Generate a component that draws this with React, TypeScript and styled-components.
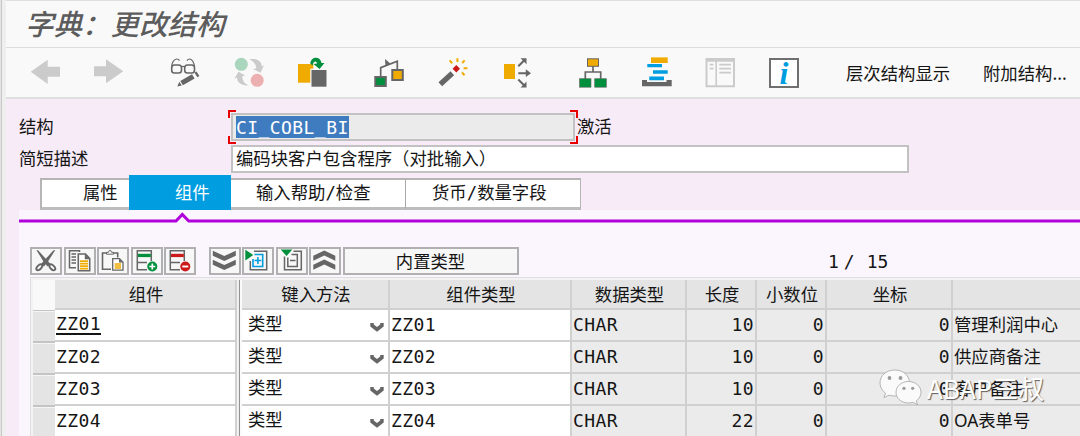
import type { ReactNode } from 'react';
import styled, { createGlobalStyle, css } from 'styled-components';

const GREY = '#666666';
const LIGHT = '#cbcbcb';
const ORANGE = '#f0ab00';
const GREEN = '#008f3c';
const BLUE = '#009de0';
const RED = '#cc1919';

const rows = [
    { name: 'ZZ01', length: 10, text: '管理利润中心' },
    { name: 'ZZ02', length: 10, text: '供应商备注' },
    { name: 'ZZ03', length: 10, text: '客户备注' },
    { name: 'ZZ04', length: 22, text: 'OA表单号' },
]

const Icon = ({ children }: { children: ReactNode }) => <IconSvg viewBox="0 0 32 32">{children}</IconSvg>

const SmallIcon = ({ children }: { children: ReactNode }) => <SmallSvg viewBox="0 0 28 24">{children}</SmallSvg>

const MainToolbar = () => (
    <Toolbar>
        <Slot $width={63}>
            <Icon><path d="M1.7 14.7 18.7 2.7V9.7H31V19.7H18.7V27Z" fill={LIGHT} /></Icon>
        </Slot>
        <Slot $width={77}>
            <Icon><path d="M31.3 14.3 14 2.3V9.3H2V19.3H14V26.3Z" fill={LIGHT} /></Icon>
        </Slot>
        <Slot $width={64}>
            <Icon>
                <g fill="none" stroke={GREY} strokeWidth="1.6">
                    <rect x="2.7" y="8" width="9.8" height="8" rx="2.8" />
                    <rect x="15.7" y="8" width="9.8" height="8" rx="2.8" />
                    <path d="M12.5 9.8Q14 8.8 15.7 9.8M2.6 10C3 6 5 2.5 7.5 2Q9.5 1.8 10.5 3.6M25.6 10C25 6 23.5 2.5 20.8 2Q19 1.8 18 3.6" strokeWidth="1.2" />
                </g>
                <path d="M8.3 29.5 10.3 24.7 12.8 28.5ZM11.3 24 23 17.2 25.6 21.6 13.9 28.2ZM25.5 15.7 27.5 14.6 30.4 19 28.4 20.3Z" fill={GREY} />
            </Icon>
        </Slot>
        <Slot $width={63}>
            <Icon>
                <circle cx="8.3" cy="7.3" r="6.5" fill="#a9d6bc" />
                <circle cx="24.2" cy="23.3" r="6.5" fill="#edb0b0" />
                <path d="M16.5 2.3C24 1 29 4.5 28.6 9.5L31 8.3 27.5 15.7 20 12 23.3 11.5C23 7.5 21 4.5 16.500 2.3Z" fill={LIGHT} />
                <path d="M15.7 28.3C8.5 29 4 25.5 4 20.5L1.3 21.7 5.5 14.7 12.3 18.5 9.3 19C9.300 23.3 11 26.500 15.7 28.3Z" fill={LIGHT} />
            </Icon>
        </Slot>
        <Slot $width={77}>
            <Icon>
                <rect x="2" y="7" width="15.3" height="18.7" fill={ORANGE} />
                <rect x="14.3" y="11.7" width="18" height="19" fill="#f9f9f9" />
                <rect x="15.5" y="13" width="15" height="16.7" fill={GREY} />
                <path d="M14.3 6.500C15 -1 24.5 -1 25.500 6L28.5 6 23.5 12 17.5 7 21 6.500C20.5 3.5 17.5 3.8 16.5 8.500Z" fill={GREEN} />
            </Icon>
        </Slot>
        <Slot $width={64}>
            <Icon>
                <path d="M7.7 19V10.7L24.3 4.3V12" fill="none" stroke={GREY} strokeWidth="1.7" />
                <path d="M12 2 17.3 6.600 12.500 9.3Z" fill={GREY} />
                <rect x="2.3" y="20" width="10.5" height="9" fill={GREEN} stroke={GREY} strokeWidth="2" />
                <rect x="19.3" y="13" width="10.5" height="10" fill={ORANGE} stroke={GREY} strokeWidth="2" />
            </Icon>
        </Slot>
        <Slot $width={64}>
            <Icon>
                <path d="M3.3 27.3 15.3 16.3" stroke={GREY} strokeWidth="5.3" />
                <path d="M19.3 8 23 11.7 19.3 15.4 15.6 11.7Z" fill={RED} />
                <path d="M20.4 1.2V5M12.6 3.4 15.2 6.2M27.6 3.4 25.2 6M26.6 11.2H30.4M25 15.5 27.5 18.2" stroke={ORANGE} strokeWidth="2" />
            </Icon>
        </Slot>
        <Slot $width={76}>
            <Icon>
                <rect x="3" y="7" width="11" height="15" fill={ORANGE} />
                <path d="M17.3 9.3 23.8 2.8M17.3 16.2H28M17.3 22.5 24 29.2" stroke={GREY} strokeWidth="2" />
                <path d="M19.5 1.3H25.5V7.3ZM24.8 12.3 30 16.2 24.8 20.1ZM25.5 24.500V30.500H19.5Z" fill={GREY} />
            </Icon>
        </Slot>
        <Slot $width={64}>
            <Icon>
                <path d="M16 9V14.7M8.3 22V15H23.7V22" fill="none" stroke={GREY} strokeWidth="1.7" />
                <rect x="10.5" y="1.8" width="11" height="7.5" fill={ORANGE} stroke={GREY} />
                <rect x="2.500" y="21.7" width="11.5" height="8.5" fill={GREEN} stroke={GREY} strokeWidth="0.6" />
                <rect x="17.7" y="21.7" width="11.7" height="8.5" fill={GREEN} stroke={GREY} strokeWidth="0.6" />
            </Icon>
        </Slot>
        <Slot $width={63}>
            <Icon>
                <path d="M1 23H6V25H25.5V23H30.7V29.3H1Z" fill={GREY} />
                <rect x="10" y="0.4" width="16.7" height="5.6" fill={ORANGE} />
                <path d="M6.3 7H21V10.3H6.3ZM12 13.3H26.7V16.7H12ZM8.3 19.6H23V23.2H8.3Z" fill={BLUE} />
            </Icon>
        </Slot>
        <Slot $width={64}>
            <Icon>
                <path d="M2.5 2H30V29.3H2.5Z" fill="none" stroke={LIGHT} strokeWidth="2" />
                <path d="M2 1H30.7V4.7H2ZM11.4 4H13V29H11.4Z" fill={LIGHT} />
                <path d="M5.7 7.7H9.5M5.7 11.7H9.5M15.3 7.7H27M15.3 11.7H27M15.3 15.7H27" stroke={LIGHT} strokeWidth="1.8" />
            </Icon>
        </Slot>
        <Slot $width={78}>
            <InfoIcon>i</InfoIcon>
        </Slot>
        <ToolbarText>层次结构显示</ToolbarText>
        <ToolbarText>附加结构...</ToolbarText>
    </Toolbar>
)

const TableToolbar = () => (
    <ButtonBar>
        <SmallButton>
            <SmallIcon>
                <path d="M4.3 1 6.3 1.5 18.5 15 15.5 17.5 11.500 12.5Z" fill={GREY} />
                <path d="M23.3 1 21.3 1.5 9 15 12 17.5 16 12.5Z" fill={GREY} />
                <ellipse cx="7.3" cy="18.3" rx="3.6" ry="2" transform="rotate(-45 7.3 18.3)" fill="none" stroke={GREY} strokeWidth="1.9" />
                <ellipse cx="20.3" cy="18.3" rx="3.6" ry="2" transform="rotate(45 20.3 18.3)" fill="none" stroke={GREY} strokeWidth="1.9" />
            </SmallIcon>
        </SmallButton>
        <SmallButton>
            <SmallIcon>
                <path d="M10 18.7H3.5V1.7H13.5V3" fill="none" stroke={GREY} strokeWidth="1.5" />
                <path d="M5.5 5H10M5.5 8H10M5.5 11H10M5.5 14H10" stroke={GREY} strokeWidth="1.4" />
                <path d="M12.3 5H19.5L23.7 9.5V21.7H12.3Z" fill="#fff" stroke={GREY} strokeWidth="1.6" />
                <path d="M18.8 5V10.2H23.7Z" fill={GREY} />
                <path d="M14 12.2H22M14 14.7H22M14 17.2H22M14 19.7H22" stroke={ORANGE} strokeWidth="1.8" />
            </SmallIcon>
        </SmallButton>
        <SmallButton>
            <SmallIcon>
                <path d="M12 20.3H3.5V4H7.5M14.5 4H18.7V8.5" fill="none" stroke={GREY} strokeWidth="1.6" />
                <path d="M7.5 5.2V3.3H9.5L10.3 1.5H11.8L12.6 3.3H14.5V5.2Z" fill="none" stroke={GREY} />
                <path d="M13.7 9.7H20.5L24 13.2V21.2H13.7Z" fill="#fff" stroke={GREY} strokeWidth="1.3" />
                <path d="M20 9.5V13.5H24Z" fill={GREY} />
                <path d="M15.7 15H22M15.7 17H22M15.7 19H22" stroke={ORANGE} strokeWidth="1.6" />
            </SmallIcon>
        </SmallButton>
        <SmallButton>
            <SmallIcon>
                <path d="M14 20.7H4.3V1.7H18.3V12M4.3 13.5H14" fill="none" stroke={GREY} strokeWidth="1.5" />
                <rect x="5" y="4.8" width="12.8" height="3.3" fill={GREEN} />
                <circle cx="19.3" cy="17.5" r="5" fill={GREEN} />
                <path d="M16.3 17.5H22.3M19.3 14.5V20.5" stroke="#fff" strokeWidth="1.7" />
            </SmallIcon>
        </SmallButton>
        <SmallButton>
            <SmallIcon>
                <path d="M14 20.7H4.3V1.7H18.3V12M4.3 13.5H14" fill="none" stroke={GREY} strokeWidth="1.5" />
                <rect x="5" y="4.8" width="12.8" height="3.3" fill={RED} />
                <circle cx="19.3" cy="17.5" r="5" fill={RED} />
                <path d="M16.3 17.5H22.3" stroke="#fff" strokeWidth="1.9" />
            </SmallIcon>
        </SmallButton>
        <SmallButton $spaced>
            <SmallIcon>
                <path d="M1.8 1.7 13.3 7 24.8 1.7V6.7L13.3 12 1.8 6.7ZM1.8 10.700 13.3 16 24.8 10.700V15.700L13.3 21 1.8 15.7Z" fill={GREY} />
            </SmallIcon>
        </SmallButton>
        <SmallButton>
            <SmallIcon>
                <path d="M10 2.2H22.7V20.7H6.3V12" fill="none" stroke={GREY} strokeWidth="1.5" />
                <path d="M10.5 5.5H18.7V17.5H9V10" fill="none" stroke={BLUE} strokeWidth="1.6" />
                <path d="M10.5 11.5H17.3M13.9 8V15" stroke={BLUE} strokeWidth="1.5" />
                <path d="M1.3 0.7 9.3 6 1.3 11.5Z" fill={GREEN} />
            </SmallIcon>
        </SmallButton>
        <SmallButton>
            <SmallIcon>
                <path d="M15.5 2.2H23.3V20.7H6.5V7.5" fill="none" stroke={GREY} strokeWidth="1.5" />
                <path d="M13.5 5.5H19.3V17.5H9.8V8.5M12 11.5H17.5" fill="none" stroke={GREY} strokeWidth="1.5" />
                <path d="M2.7 0.6H14.3L8.5 7Z" fill={GREEN} />
            </SmallIcon>
        </SmallButton>
        <SmallButton>
            <SmallIcon>
                <path d="M2.3 6.8 13.3 1.5 24.3 6.8V11.8L13.3 6.5 2.3 11.8ZM2.3 15.8 13.3 10.5 24.3 15.8V20.8L13.3 15.5 2.3 20.8Z" fill={GREY} />
            </SmallIcon>
        </SmallButton>
        <TypeButton>内置类型</TypeButton>
        <Counter>
            <span>1</span>
            <span>/</span>
            <span>15</span>
        </Counter>
    </ButtonBar>
)

const Table = () => (
    <TableFrame>
        <Row $header>
            <Selector $header />
            <Cell $header>组件</Cell>
            <Splitter />
            <Cell $header>键入方法</Cell>
            <Cell $header>组件类型</Cell>
            <Cell $header>数据类型</Cell>
            <Cell $header>长度</Cell>
            <Cell $header>小数位</Cell>
            <Cell $header>坐标</Cell>
            <Cell $header />
        </Row>
        {rows.map((row, i) => (
            <Row key={row.name}>
                <Selector />
                <Cell><Name $focused={i === 0}>{row.name}</Name></Cell>
                <Splitter />
                <Cell $select>
                    类型
                    <Chevron viewBox="0 0 14 10"><path d="M0.3 1H3.8V2.5L7 5 10.2 2.5V1H13.7V4.6L7 9.8 0.3 4.6Z" fill={GREY} /></Chevron>
                </Cell>
                <Cell>{row.name}</Cell>
                <Cell $locked>CHAR</Cell>
                <Cell $locked $right>{row.length}</Cell>
                <Cell $locked $right>0</Cell>
                <Cell $locked $right>0</Cell>
                <Cell $locked $cjk>{row.text}</Cell>
            </Row>
        ))}
    </TableFrame>
)

const App = () => (
    <Page>
        <GlobalStyle />
        <Window>
            <TitleBar>字典：更改结构</TitleBar>
            <MainToolbar />
            <Form>
                <Label>结构</Label>
                <FocusFrame>
                    <Input $locked><Selected>CI_COBL_BI</Selected></Input>
                    <Corner $x="left" $y="top" />
                    <Corner $x="right" $y="top" />
                    <Corner $x="left" $y="bottom" />
                    <Corner $x="right" $y="bottom" />
                </FocusFrame>
                <Status>激活</Status>
            </Form>
            <Form>
                <Label>简短描述</Label>
                <Input $wide>编码块客户包含程序（对批输入）</Input>
            </Form>
            <Tabs>
                <Tab $width={89} $indent={41}>属性</Tab>
                <ActiveTab>组件</ActiveTab>
                <Tab $width={174} $indent={25}>输入帮助/检查</Tab>
                <Tab $width={176} $indent={26} $divided>货币/数量字段</Tab>
            </Tabs>
            <Panel>
                <TabLine viewBox="0 0 1061 14">
                    <path d="M0 11H157L163.3 4.5 169.7 11H1061" fill="none" stroke="#b000dc" strokeWidth="3" />
                </TabLine>
                <TableToolbar />
                <Table />
            </Panel>
        </Window>
        <Watermark>
            <WechatLogo viewBox="0 0 44 38">
                <path d="M16 1C7 1 1 6.8 1 14 1 18.3 3.3 21.8 6.5 24.2L5 28.5 10.3 26.2C12 26.8 14 27 16 27 24.5 27 30.5 21 30.5 14 30.5 6.8 24.5 1 16 1Z" />
                <path d="M29.5 12.5C22.3 12.5 17 17.3 17 23.2 17 29.3 22.3 34 29.5 34 31.2 34 32.7 33.8 34 33.3L38.5 35.8 37.3 31.8C40.2 29.8 42 26.8 42 23.2 42 17.3 36.7 12.5 29.5 12.5Z" />
                <g fill="#9a9a9a" stroke="none">
                    <circle cx="10.5" cy="9" r="1.9" />
                    <circle cx="21.5" cy="9" r="1.9" />
                    <circle cx="25" cy="19.3" r="1.6" />
                    <circle cx="33.7" cy="19.3" r="1.6" />
                </g>
            </WechatLogo>
            ABAP三叔
        </Watermark>
    </Page>
)

export default App

const GlobalStyle = createGlobalStyle`
  * { box-sizing: border-box; }
  body {
    margin: 0;
    overflow: hidden;
    color: #151515;
    font-family: "DejaVu Sans Mono", "Noto Sans CJK SC", sans-serif;
    font-size: 17.35px;
    line-height: 1;
  }
`;

const Page = styled.div`
    position: relative;
    width: 1080px;
    height: 436px;
    padding-left: 6px;
    overflow: hidden;
    background: linear-gradient(90deg, #e4e4e4 1px, #c8c8c8 1px, #c8c8c8 2px, #efefef 2px);
`;

const Window = styled.div`
    height: 436px;
    overflow: hidden;
    background: #f7ebf8;
`;

const TitleBar = styled.div`
    display: flex;
    align-items: center;
    height: 48px;
    padding: 0 0 1px 19px;
    border-top: 1px solid #dedede;
    border-bottom: 1px solid #dddddd;
    background: #f9f9f9;
    color: #5c5c5c;
    font-family: "Noto Sans CJK SC", sans-serif;
    font-size: 28.5px;
    font-weight: 500;
    font-style: italic;
`;

const Toolbar = styled.div`
    display: flex;
    align-items: center;
    height: 51px;
    padding: 1px 0 0 23px;
    border-bottom: 2px solid #dfdfdf;
    background: #f9f9f9;
`;

const Slot = styled.div<{ $width: number }>`
    flex: none;
    width: ${({ $width }) => $width}px;
    height: 32px;
`;

const IconSvg = styled.svg`
    display: block;
    width: 32px;
    height: 32px;
`;

const SmallSvg = styled.svg`
    display: block;
    width: 28px;
    height: 24px;
`;

const InfoIcon = styled.div`
    width: 30px;
    height: 30px;
    margin: 1px;
    border: 2px solid #6f6f6f;
    background: #fff;
    color: ${BLUE};
    font: italic 700 32px/27px "Liberation Serif", serif;
    text-align: center;
`;

const ToolbarText = styled.div`
    width: 137px;
    flex: none;
    font-family: "Noto Sans CJK SC", sans-serif;
`;

const Form = styled.div`
    display: flex;
    align-items: center;
    height: 32px;
    padding-left: 13px;

    ${Toolbar} + & {
        margin-top: 12px;
    }
`;

const Label = styled.div`
    width: 212px;
    padding-top: 2px;
`;

const FocusFrame = styled.div`
    position: relative;
`;

const Input = styled.div<{ $locked?: boolean; $wide?: boolean }>`
    display: flex;
    align-items: center;
    width: ${({ $wide }) => ($wide ? 678 : 344)}px;
    height: 28px;
    padding: ${({ $locked }) => ($locked ? '0 0 0 3px' : '2px 0 0 3px')};
    border: 2px solid #c2c2c2;
    background: ${({ $locked }) => ($locked ? '#ebebeb' : '#fff')};
`;

const Selected = styled.span`
    height: 22px;
    background: #3f7cbf;
    color: #fff;
    font-size: 18px;
    line-height: 23px;
    letter-spacing: 0.43px;
`;

const Corner = styled.i<{ $x: string; $y: string }>`
    position: absolute;
    ${({ $x }) => $x}: -3px;
    ${({ $y }) => $y}: -3px;
    width: 8px;
    height: 8px;
    ${({ $x, $y }) => css`
        border-${$x}: 2px solid #e60000;
        border-${$y}: 2px solid #e60000;
    `}
`;

const Status = styled.div`
    margin-left: 2px;
    padding-top: 2px;
`;

const Tabs = styled.div`
    display: flex;
    align-items: flex-end;
    height: 35px;
    margin-left: 34px;
`;

const Tab = styled.div<{ $width: number; $indent: number; $divided?: boolean }>`
    width: ${({ $width }) => $width}px;
    height: 32px;
    padding-left: ${({ $indent }) => $indent}px;
    border-top: 2px solid #b5b5b5;
    border-bottom: 3px solid #bdbdbd;
    background: #fff;
    line-height: 27px;
    white-space: nowrap;

    &:first-child {
        border-left: 2px solid #b5b5b5;
    }
    &:last-child {
        border-right: 1px solid #b5b5b5;
    }
    ${({ $divided }) => $divided && 'border-left: 1px solid #a8a8a8;'}
`;

const ActiveTab = styled.div`
    width: 102px;
    height: 35px;
    padding-left: 46px;
    background: #009de0;
    color: #fff;
    line-height: 36px;
`;

const Panel = styled.div`
    height: 226px;
    margin-left: 13px;
    background: #fbf6fd;
`;

const TabLine = styled.svg`
    display: block;
    width: 1061px;
    height: 14px;
`;

const ButtonBar = styled.div`
    display: flex;
    align-items: center;
    gap: 1.5px;
    height: 28px;
    margin: 23px 0 0 11px;
`;

const SmallButton = styled.div<{ $spaced?: boolean }>`
    flex: none;
    width: 32px;
    height: 28px;
    margin-left: ${({ $spaced }) => ($spaced ? 11 : 0)}px;
    border: 2px solid #b0b0b0;
    background: #f7f7f7;
`;

const TypeButton = styled.div`
    width: 176px;
    height: 28px;
    border: 2px solid #b0b0b0;
    background: #f7f7f7;
    line-height: 26px;
    text-align: center;
`;

const Counter = styled.div`
    display: flex;
    gap: 5px;
    margin-left: 308px;
    padding-top: 1px;
    font-size: 18px;

    span:last-child {
        margin-left: 7px;
    }
`;

const TableFrame = styled.div`
    width: 1050px;
    height: 159px;
    margin: 2px 0 0 11px;
    padding: 2px 0 0 1px;
    border: solid #dedede;
    border-width: 1px 0 0 1px;
    background: #f4f2f5;
`;

const Row = styled.div<{ $header?: boolean }>`
    display: grid;
    grid-template-columns: 23px 182px 5px 148px 182px 115px 70px 70px 126px 140px;
    height: ${({ $header }) => ($header ? 30 : 32)}px;
`;

const Selector = styled.div<{ $header?: boolean }>`
    margin-left: 1px;
    background: ${({ $header }) => ($header ? '#f9f9f9' : '#e4e4e4')};
    ${({ $header }) => !$header && css`
        border-top: 1px solid #c4c4c4;
        border-bottom: 1px solid #c4c4c4;
        box-shadow: 0 1px 0 #f4f4f4 inset;
    `}
`;

const Cell = styled.div<{ $header?: boolean; $locked?: boolean; $right?: boolean; $select?: boolean; $cjk?: boolean }>`
    display: flex;
    align-items: center;
    justify-content: ${({ $right }) => ($right ? 'flex-end' : 'flex-start')};
    padding: 0 1px 0 1px;
    border-right: 2px solid #d0d0d0;
    border-bottom: 2px solid #d0d0d0;
    background: ${({ $locked }) => ($locked ? '#ebebeb' : '#fff')};
    font-size: 18px;
    letter-spacing: 0.43px;
    white-space: nowrap;

    ${({ $header }) => $header && css`
        justify-content: center;
        padding: 3px 0 0 2px;
        background: #e4e4e4;
        font-size: 17.35px;
        letter-spacing: 0;
    `}
    ${({ $select }) => $select && css`
        justify-content: space-between;
        padding: 0 4px 0 6px;
        font-size: 17.35px;
        letter-spacing: 0;
    `}
    ${({ $cjk }) => $cjk && css`
        font-family: "Noto Sans", "Noto Sans CJK SC", sans-serif;
        font-size: 17.35px;
        letter-spacing: 0;
    `}
`;

const Name = styled.span<{ $focused: boolean }>`
    border-bottom: ${({ $focused }) => ($focused ? '2px solid #151515' : 'none')};
`;

const Chevron = styled.svg`
    width: 14px;
    height: 10px;
    margin-top: 4px;
`;

const Splitter = styled.div`
    border-left: 1px solid #f4f2f5;
    background: linear-gradient(90deg, #eeeeee 1px, #929292 1px, #929292 2px, #fafafa 2px);
`;

const Watermark = styled.div`
    position: absolute;
    left: 879px;
    top: 369px;
    display: flex;
    align-items: center;
    gap: 4px;
    color: #fff;
    font-family: "Noto Sans CJK SC", sans-serif;
    font-size: 26px;
    text-shadow: 1px 1px 1px rgba(80, 80, 80, 0.9);
`;

const WechatLogo = styled.svg`
    width: 44px;
    height: 38px;
    fill: #fafafa;
    stroke: #a5a5a5;
    stroke-width: 0.8;
`;
